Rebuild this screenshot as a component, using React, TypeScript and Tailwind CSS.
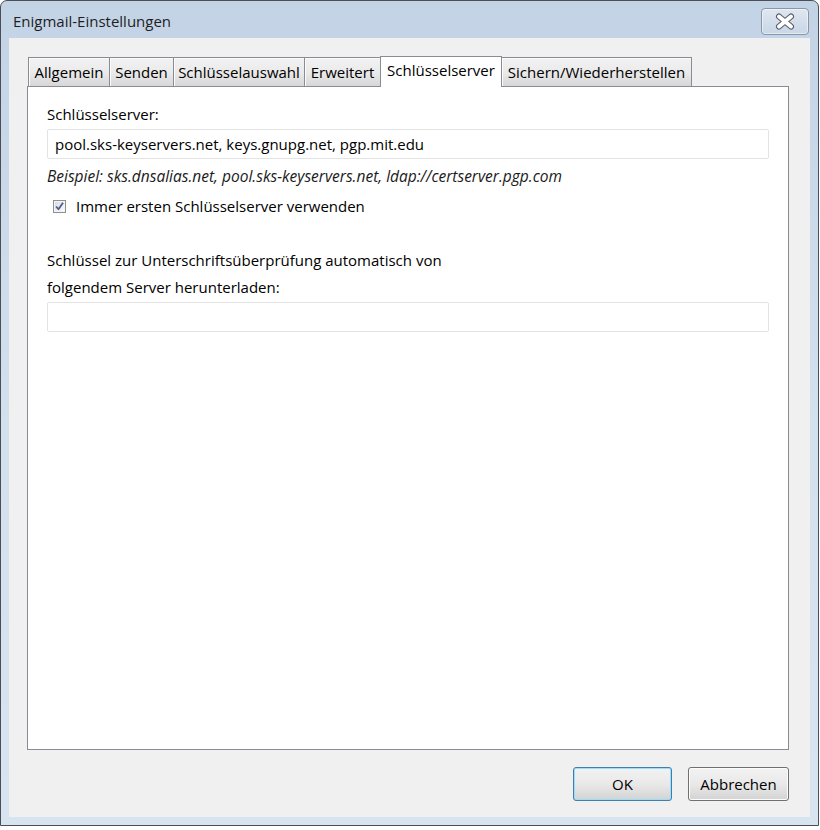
import { useState } from "react";

const tabs = [
  { label: "Allgemein", width: "w-[82px]" },
  { label: "Senden", width: "w-[65px]" },
  { label: "Schlüsselauswahl", width: "w-[132px]" },
  { label: "Erweitert", width: "w-[77px]" },
  { label: "Schlüsselserver", width: "w-[122px]" },
  { label: "Sichern/Wiederherstellen", width: "w-[191px]" },
];

function CloseGlyph() {
  return (
    <svg width="20" height="17" viewBox="0 0 20 17" aria-hidden="true">
      <path
        d="M4 3.5 L16 13.5 M16 3.5 L4 13.5"
        stroke="#555b66"
        strokeWidth="6"
        strokeLinecap="round"
        fill="none"
      />
      <path
        d="M4 3.5 L16 13.5 M16 3.5 L4 13.5"
        stroke="#ffffff"
        strokeWidth="4"
        strokeLinecap="round"
        fill="none"
      />
    </svg>
  );
}

function Checkbox({ checked, onToggle }: { checked: boolean; onToggle: () => void }) {
  return (
    <button
      type="button"
      onClick={onToggle}
      className="flex h-[13px] w-[13px] items-center justify-center border border-[#8e8f8f] bg-white p-0"
    >
      <span className="flex h-[11px] w-[11px] items-center justify-center border border-[#f4f4f4] bg-gradient-to-br from-[#dcdcdc] to-[#fafafa]">
        {checked ? (
          <svg width="9" height="9" viewBox="0 0 9 9" aria-hidden="true">
            <path
              d="M1 4.5 L3.5 7.2 L8 0.8"
              stroke="#4a5f97"
              strokeWidth="1.8"
              fill="none"
              strokeLinejoin="round"
            />
          </svg>
        ) : null}
      </span>
    </button>
  );
}

export default function App() {
  const [activeTab, setActiveTab] = useState("Schlüsselserver");
  const [useFirst, setUseFirst] = useState(true);
  const [servers, setServers] = useState("pool.sks-keyservers.net, keys.gnupg.net, pgp.mit.edu");
  const [autoServer, setAutoServer] = useState("");

  return (
    <div
      className="h-[830px] w-[820px] bg-white text-black"
      style={{ fontFamily: '"Open Sans", "Noto Sans", sans-serif' }}
    >
      <div className="flex h-[826px] w-[819px] flex-col rounded-t-[7px] border border-[#4b4f55] bg-gradient-to-b from-[#c3d3e6] via-[#d3e0ee] to-[#d9e4f1]">
        {/* title bar */}
        <div className="flex h-[37px] items-start justify-between pl-[12px] pr-[9px]">
          <span className="pt-[9px] text-[15px] leading-[22px] text-[#1e1e1e]">Enigmail-Einstellungen</span>
          <button
            type="button"
            className="mt-[7px] flex h-[27px] w-[48px] items-center justify-center rounded-[4px] border border-[#8a96a8] bg-gradient-to-b from-[#dfe7f1] to-[#c9d6e6] shadow-[inset_0_0_0_1px_rgba(255,255,255,0.5)]"
          >
            <CloseGlyph />
          </button>
        </div>

        {/* client area */}
        <div className="mx-[8px] mb-[8px] flex flex-1 flex-col bg-[#f0f0f0] pt-[18px]">
          <div className="ml-[19px] flex h-[30px] items-end">
            {tabs.map((tab, i) => {
              const active = tab.label === activeTab;
              return (
                <button
                  key={tab.label}
                  type="button"
                  onClick={() => setActiveTab(tab.label)}
                  className={[
                    tab.width,
                    i > 0 ? "-ml-px" : "",
                    "flex items-center justify-center border-x border-t border-[#898c95] p-0 text-[15px] whitespace-nowrap",
                    active
                      ? "relative z-10 -mb-px h-[31px] bg-white pb-[3px]"
                      : "h-[29px] bg-gradient-to-b from-[#f2f2f2] via-[#ebebeb] to-[#d6d6d6] pt-[1px] shadow-[inset_1px_1px_0_#fbfbfb]",
                  ].join(" ")}
                >
                  {tab.label}
                </button>
              );
            })}
          </div>

          <div className="ml-[18px] mr-[21px] flex flex-1 flex-col border border-[#898c95] bg-white px-[19px] pt-[17px] text-[15px]">
            <label className="leading-[20px]">Schlüsselserver:</label>
            <input
              value={servers}
              onChange={(e) => setServers(e.target.value)}
              className="mt-[5px] h-[30px] w-full rounded-[2px] border border-[#e3e3e3] bg-white px-[7px] text-[15px] outline-none"
            />
            <p className="mt-[7px] text-[15.5px] italic leading-[20px] text-[#1a1a1a]">
              Beispiel: sks.dnsalias.net, pool.sks-keyservers.net, ldap://certserver.pgp.com
            </p>
            <div className="mt-[10px] flex h-[20px] items-center pl-[6px]">
              <Checkbox checked={useFirst} onToggle={() => setUseFirst(!useFirst)} />
              <span className="ml-[10px]">Immer ersten Schlüsselserver verwenden</span>
            </div>

            <p className="mt-[31px] leading-[27px]">
              Schlüssel zur Unterschriftsüberprüfung automatisch von
              <br />
              folgendem Server herunterladen:
            </p>
            <input
              value={autoServer}
              onChange={(e) => setAutoServer(e.target.value)}
              className="mt-[1px] h-[30px] w-full rounded-[2px] border border-[#e3e3e3] bg-white px-[7px] text-[15px] outline-none"
            />
          </div>

          <div className="mb-[16px] mr-[21px] mt-[17px] flex justify-end gap-[16px]">
            <button
              type="button"
              className="h-[34px] w-[99px] rounded-[3px] border border-[#3c7fb1] bg-gradient-to-b from-[#f2f2f2] via-[#e9e9e9] to-[#d3d3d3] text-[15px] shadow-[inset_0_0_0_1px_#9fdcf6]"
            >
              OK
            </button>
            <button
              type="button"
              className="h-[34px] w-[101px] rounded-[3px] border border-[#707070] bg-gradient-to-b from-[#f2f2f2] via-[#e9e9e9] to-[#d3d3d3] text-[15px] shadow-[inset_0_0_0_1px_#fcfcfc]"
            >
              Abbrechen
            </button>
          </div>
        </div>
      </div>
    </div>
  );
}
